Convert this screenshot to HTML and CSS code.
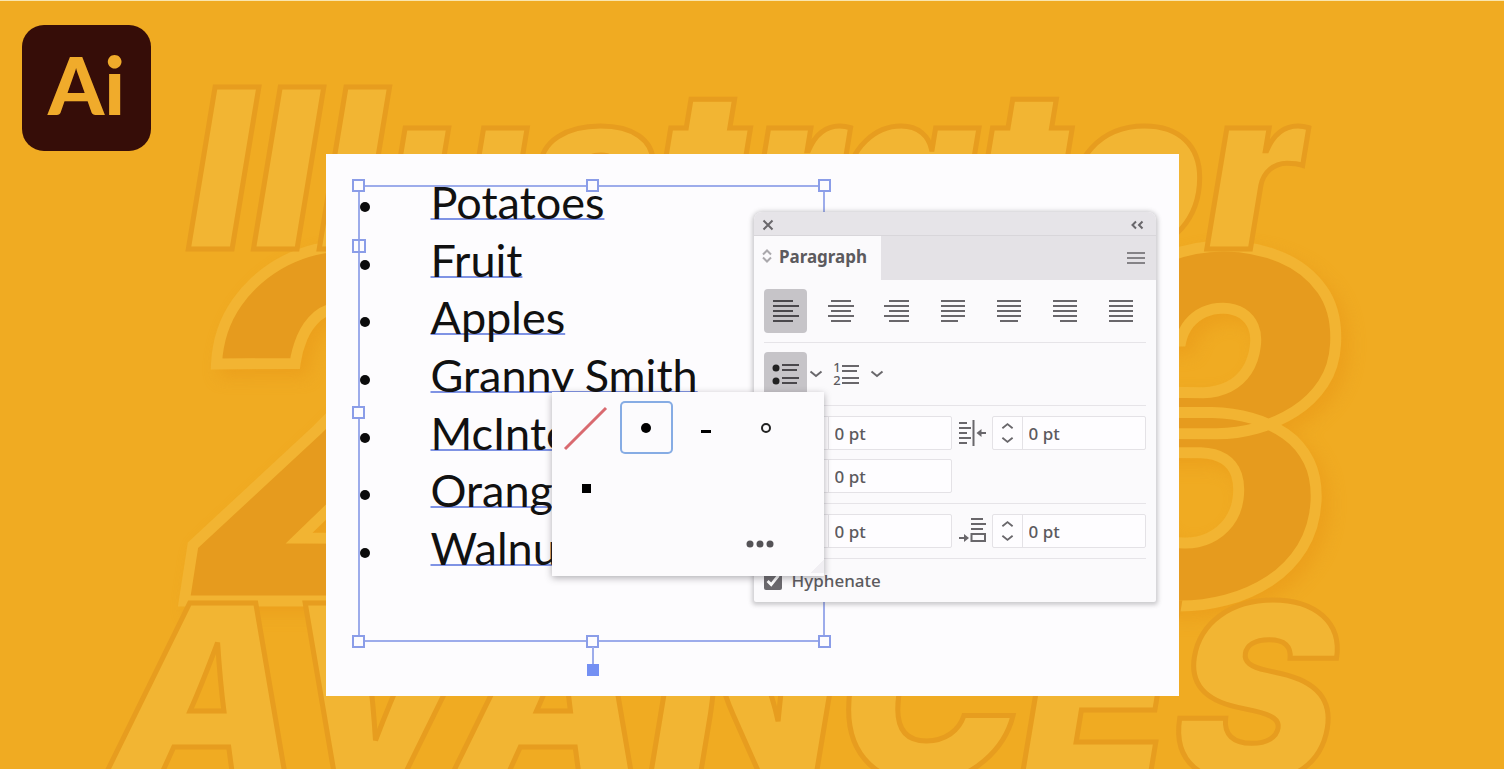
FILE: index.html
```
<!DOCTYPE html>
<html lang="en">
<head>
<meta charset="utf-8">
<meta name="viewport" content="width=device-width, initial-scale=1">
<title>Illustrator 2023</title>
<link rel="stylesheet" href="styles.css">
</head>
<body>
<!-- big lettering behind the card -->
<svg class="backdrop" viewBox="0 0 1504 769" preserveAspectRatio="xMidYMin slice" aria-hidden="true">
  <text class="word year" x="186" y="601">202<tspan dx="50">3</tspan></text>
  <text class="word" x="188" y="249">Illustrator</text>
  <text class="word caps" x="108" y="781">AVANCES</text>
</svg>

<div class="logo">Ai</div>

<main class="card">
  <div class="frame">
    <ul class="items">
      <li><span>Potatoes</span></li>
      <li><span>Fruit</span></li>
      <li><span>Apples</span></li>
      <li><span>Granny Smith</span></li>
      <li><span>McIntosh</span></li>
      <li><span>Oranges</span></li>
      <li><span>Walnuts</span></li>
    </ul>
    <i class="handle nw"></i><i class="handle n"></i><i class="handle ne"></i>
    <i class="handle port"></i><i class="handle w"></i>
    <i class="handle sw"></i><i class="handle s"></i><i class="handle se"></i>
    <i class="stem"></i>
  </div>

  <section class="panel">
    <header class="bar">
      <button type="button" aria-label="Close"><svg width="12" height="12" viewBox="0 0 12 12"><path d="M1.500 1.500l9 9M10.500 1.500l-9 9" stroke-width="2.400"/></svg></button>
      <button type="button" aria-label="Collapse"><svg width="14" height="10" viewBox="0 0 14 10"><path d="M6 1.500L2.500 5L6 8.500M12.500 1.500L9 5l3.500 3.500" stroke-width="2"/></svg></button>
    </header>
    <div class="tabs">
      <button type="button" class="tab"><svg class="pale" width="10" height="14" viewBox="0 0 10 14"><path d="M1 5.500L5 1.500l4 4M1 8.500l4 4l4-4"/></svg>Paragraph</button>
      <button type="button" class="menu" aria-label="Panel menu"><svg width="18" height="14" viewBox="0 0 18 14"><path d="M0 2h18M0 7h18M0 12h18"/></svg></button>
    </div>
    <div class="body">
      <div class="align">
        <button type="button" class="on" aria-label="Align left"><svg width="28" height="24" viewBox="0 0 28 24"><path d="M2 2h20M2 7h26M2 12h20M2 17h26M2 22h20"/></svg></button>
        <button type="button" aria-label="Align center"><svg width="28" height="24" viewBox="0 0 28 24"><path d="M4 2h20M1 7h26M4 12h20M1 17h26M4 22h20"/></svg></button>
        <button type="button" aria-label="Align right"><svg width="28" height="24" viewBox="0 0 28 24"><path d="M6 2h20M1 7h25M6 12h20M1 17h25M6 22h20"/></svg></button>
        <button type="button" aria-label="Justify, last line left"><svg width="28" height="24" viewBox="0 0 28 24"><path d="M2 2h24M2 7h24M2 12h24M2 17h24M2 22h17"/></svg></button>
        <button type="button" aria-label="Justify, last line centered"><svg width="28" height="24" viewBox="0 0 28 24"><path d="M2 2h24M2 7h24M2 12h24M2 17h24M5 22h18"/></svg></button>
        <button type="button" aria-label="Justify, last line right"><svg width="28" height="24" viewBox="0 0 28 24"><path d="M2 2h24M2 7h24M2 12h24M2 17h24M9 22h17"/></svg></button>
        <button type="button" aria-label="Justify all lines"><svg width="28" height="24" viewBox="0 0 28 24"><path d="M2 2h24M2 7h24M2 12h24M2 17h24M2 22h24"/></svg></button>
      </div>
      <div class="lists">
        <button type="button" class="on" aria-label="Bulleted list"><svg width="28" height="24" viewBox="0 0 28 24"><path d="M11 3h17M11 8h15M11 16h17M11 21h15"/><circle cx="5" cy="6" r="3.500"/><circle cx="5" cy="19" r="3.500"/></svg></button>
        <button type="button" class="drop" aria-label="Bullet options"><svg width="14" height="8" viewBox="0 0 14 8"><path d="M1.500 1.500L7 6l5.500-4.500"/></svg></button>
        <button type="button" class="numbers" aria-label="Numbered list"><span>1<br>2</span><svg width="18" height="24" viewBox="0 0 18 24"><path d="M1 4h17M1 9h15M1 16h17M1 21h17"/></svg></button>
        <button type="button" class="drop" aria-label="Number options"><svg width="14" height="8" viewBox="0 0 14 8"><path d="M1.500 1.500L7 6l5.500-4.500"/></svg></button>
      </div>
      <div class="fields">
        <svg width="28" height="26" viewBox="0 0 28 26"><path d="M12 0v26M17 3h9M17 8h11M17 13h9M17 18h11M17 23h9M0 13h9M5 9l4 4l-4 4"/></svg>
        <div class="field"><div class="spin"><button type="button" aria-label="More"><svg width="14" height="8" viewBox="0 0 14 8"><path d="M1.500 6.500L7 2l5.500 4.500"/></svg></button><button type="button" aria-label="Less"><svg width="14" height="8" viewBox="0 0 14 8"><path d="M1.500 1.500L7 6l5.500-4.500"/></svg></button></div><input type="text" value="0 pt" aria-label="Left indent"></div>
        <svg width="28" height="26" viewBox="0 0 28 26"><path d="M1 3h8M1 8h12M1 13h8M1 18h12M1 23h8M15.500 0v26"/><path d="M20 13h8"/><path class="solid" d="M18.500 13l5-4v8z"/></svg>
        <div class="field"><div class="spin"><button type="button" aria-label="More"><svg width="14" height="8" viewBox="0 0 14 8"><path d="M1.500 6.500L7 2l5.500 4.500"/></svg></button><button type="button" aria-label="Less"><svg width="14" height="8" viewBox="0 0 14 8"><path d="M1.500 1.500L7 6l5.500-4.500"/></svg></button></div><input type="text" value="0 pt" aria-label="Right indent"></div>
        <svg width="28" height="26" viewBox="0 0 28 26"><path d="M12 3h14M5 8h21M5 13h21M5 18h21M5 23h14"/></svg>
        <div class="field"><div class="spin"><button type="button" aria-label="More"><svg width="14" height="8" viewBox="0 0 14 8"><path d="M1.500 6.500L7 2l5.500 4.500"/></svg></button><button type="button" aria-label="Less"><svg width="14" height="8" viewBox="0 0 14 8"><path d="M1.500 1.500L7 6l5.500-4.500"/></svg></button></div><input type="text" value="0 pt" aria-label="First-line indent"></div>
      </div>
      <div class="fields">
        <svg width="28" height="26" viewBox="0 0 28 26"><path d="M13 13h12M13 18h15M13 23h12M13 2h14v7H13zM1 6h9"/></svg>
        <div class="field"><div class="spin"><button type="button" aria-label="More"><svg width="14" height="8" viewBox="0 0 14 8"><path d="M1.500 6.500L7 2l5.500 4.500"/></svg></button><button type="button" aria-label="Less"><svg width="14" height="8" viewBox="0 0 14 8"><path d="M1.500 1.500L7 6l5.500-4.500"/></svg></button></div><input type="text" value="0 pt" aria-label="Space before"></div>
        <svg width="28" height="26" viewBox="0 0 28 26"><path d="M13 1h12M13 6h15M13 11h12M13.500 16h13.500v7H13.500zM1 20h8"/><path class="solid" d="M11 20l-5-4v8z"/></svg>
        <div class="field"><div class="spin"><button type="button" aria-label="More"><svg width="14" height="8" viewBox="0 0 14 8"><path d="M1.500 6.500L7 2l5.500 4.500"/></svg></button><button type="button" aria-label="Less"><svg width="14" height="8" viewBox="0 0 14 8"><path d="M1.500 1.500L7 6l5.500-4.500"/></svg></button></div><input type="text" value="0 pt" aria-label="Space after"></div>
      </div>
      <label class="check"><input type="checkbox" checked>Hyphenate</label>
    </div>
  </section>

  <div class="popup">
    <div class="bullets">
      <button type="button" aria-label="None"><svg width="52" height="52" viewBox="0 0 52 52"><path class="none" d="M5 47L46 6"/></svg></button>
      <button type="button" class="picked" aria-label="Disc"><svg width="52" height="52" viewBox="0 0 52 52"><circle cx="26" cy="26" r="5"/></svg></button>
      <button type="button" aria-label="Dash"><svg width="52" height="52" viewBox="0 0 52 52"><rect x="21" y="28" width="10" height="3"/></svg></button>
      <button type="button" aria-label="Circle"><svg width="52" height="52" viewBox="0 0 52 52"><circle class="ring" cx="26" cy="26" r="4"/></svg></button>
      <button type="button" aria-label="Square"><svg width="52" height="52" viewBox="0 0 52 52"><rect x="22" y="22" width="9" height="9"/></svg></button>
    </div>
    <button type="button" class="more" aria-label="More options"><svg width="28" height="8" viewBox="0 0 28 8"><circle cx="4" cy="4" r="3.500"/><circle cx="14" cy="4" r="3.500"/><circle cx="24" cy="4" r="3.500"/></svg></button>
  </div>
</main>
</body>
</html>
```

FILE: styles.css
```
*{box-sizing:border-box;margin:0;padding:0;}
body{min-height:100vh;position:relative;overflow:hidden;padding:153px 24px 72px;border-top:1px solid #fae6ae;background-color:#f0ab22;font-family:"Noto Sans",sans-serif;color:#5c5a5e;}
button{border:none;background:none;color:inherit;font-family:inherit;display:flex;align-items:center;justify-content:center;}
svg{display:block;}
svg path{fill:none;stroke:#69676b;stroke-width:2;}
svg .solid{fill:#69676b;stroke:none;}

/* lettering */
.backdrop{position:absolute;left:0;top:-1px;width:100%;height:calc(100% + 1px);}
.word{font-family:Inter,sans-serif;font-weight:900;font-style:italic;font-size:222px;fill:#f2b533;stroke:#e79d1f;stroke-width:5px;}
.year{font-family:Roboto,sans-serif;font-size:492px;fill:#e69b1e;stroke:#f2b432;stroke-width:11px;filter:drop-shadow(8px 8px 8px rgba(230,145,20,.4));}
.caps{font-size:245px;}

.logo{position:absolute;left:22px;top:24px;width:129px;height:126px;border-radius:22px;background-color:#360d08;color:#f0ab2b;font:900 80px/118px Lato,sans-serif;text-align:center;}

/* white card */
.card{position:relative;width:100%;max-width:853px;min-height:542px;margin:0 auto;padding:31px 32px;background-color:#fdfcfe;}
.frame{position:relative;width:467px;height:457px;border:2px solid #9daceb;}
.items{display:grid;grid-template-rows:repeat(7,1fr);height:404px;margin-top:-14px;list-style:none;font-family:Lato,sans-serif;font-size:45px;line-height:54px;color:#111;}
.items li{display:flex;align-items:center;white-space:nowrap;}
.items li:before{content:"";width:10px;height:10px;margin:10px 61px 0 0;border-radius:50%;background-color:#0b0b0b;}
.items span{text-decoration:underline 2px #7f93e4;text-underline-offset:-1px;text-decoration-skip-ink:none;}
.handle{position:absolute;width:13px;height:13px;border:2px solid #8b9de8;background-color:#fdfcfe;}
.nw{left:-8px;top:-8px;}
.n{left:226px;top:-8px;}
.ne{right:-8px;top:-8px;}
.port{left:-8px;top:52px;width:14px;height:14px;background:linear-gradient(90deg,transparent 4px,#9daceb 4px,#9daceb 6px,transparent 6px);}
.w{left:-8px;top:219px;}
.sw{left:-8px;bottom:-8px;}
.s{left:226px;bottom:-8px;}
.se{right:-8px;bottom:-8px;}
.stem{position:absolute;left:227px;bottom:-36px;width:12px;height:29px;background:linear-gradient(#7490f3,#7490f3) 0 100%/12px 12px no-repeat,linear-gradient(#9daceb,#9daceb) 50% 0/2px 18px no-repeat;}

/* paragraph panel */
.panel{position:absolute;left:428px;top:58px;width:402px;border-radius:8px 8px 2px 2px;background-color:#fbfafc;box-shadow:0 1px 4px 2px rgba(90,88,94,.3);overflow:hidden;}
.bar{display:flex;justify-content:space-between;align-items:center;height:24px;padding:2px 12px 0 8px;background-color:#e6e4e8;border-bottom:1px solid #d8d6da;}
.tabs{display:flex;justify-content:space-between;height:44px;background-color:#e4e2e6;}
.tab{width:127px;padding:0 5px 4px 0;gap:7px;background-color:#fbfafc;font-size:17px;font-weight:700;}
.pale path{stroke:#aaa8ac;}
.menu{padding-right:11px;}
.menu path{stroke:#858387;}
.body{padding:9px 10px 0;}
.align{display:flex;justify-content:space-between;padding:0 3px 9px 0;}
.align button,.lists .on{width:43px;height:44px;border-radius:4px;}
.body .on{background-color:#c6c4c8;}
.on path{stroke:#4a484c;}
.on circle{fill:#222;}
.lists{display:flex;align-items:center;height:63px;border-top:1px solid #e6e4e8;}
.drop{width:18px;height:30px;}
.numbers{width:43px;height:44px;}
.numbers span{font-size:13px;line-height:13px;font-weight:500;}
.fields{display:grid;grid-template-columns:28px minmax(0,1fr) 28px minmax(0,1fr);gap:9px 6px;align-items:center;padding:10px 0;border-top:1px solid #e6e4e8;}
.field{display:flex;height:34px;border:1px solid #e4e2e6;border-radius:2px;background-color:#fefdff;}
.spin{display:flex;flex-direction:column;justify-content:space-between;width:30px;padding:5px 8px;border-right:1px solid #e4e2e6;}
.field input{flex:1;min-width:0;border:none;background:none;padding-left:6px;color:#5c5a5e;font:500 17px "Noto Sans",sans-serif;}
.check{display:flex;align-items:center;gap:10px;height:44px;border-top:1px solid #e6e4e8;font-size:17px;font-weight:500;}
.check input{width:18px;height:18px;accent-color:#6b696d;}

/* bullet picker */
.popup{position:absolute;left:226px;top:238px;width:272px;height:184px;padding:9px 8px;background:linear-gradient(135deg,transparent 50%,#f1eff3 50%) 100% 98%/14px 14px no-repeat,#fcfbfd;box-shadow:0 2px 7px rgba(60,58,64,.4);}
.bullets{display:grid;grid-template-columns:repeat(4,53px);gap:7px;}
.bullets button{height:53px;border-radius:5px;}
.picked{box-shadow:inset 0 0 0 2px #86ace4;}
.popup .none{stroke:#d96a70;stroke-width:3;}
.ring{fill:none;stroke:#222;stroke-width:2;}
.more{position:absolute;right:50px;bottom:28px;}
.more circle{fill:#555357;}
```
